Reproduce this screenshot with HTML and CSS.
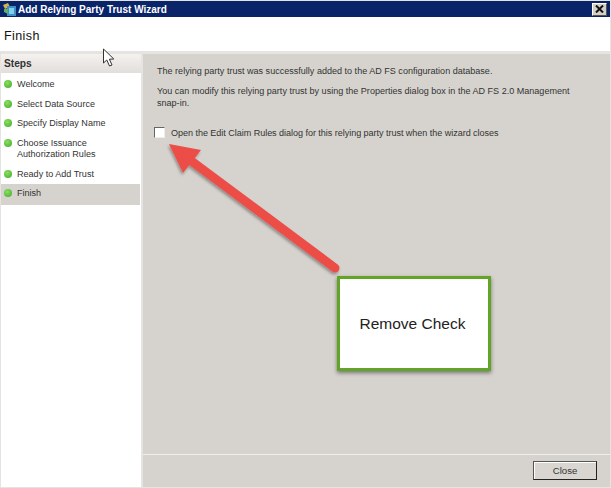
FILE: index.html
```html
<!DOCTYPE html>
<html lang="en">
<head>
  <meta charset="UTF-8">
  <title>Add Relying Party Trust Wizard</title>
  <link rel="stylesheet" href="styles.css">
</head>
<body>
  <div class="window">
    <div class="titlebar">
      <svg class="app-icon" width="16" height="15" viewBox="0 0 16 15">
        <path d="M1 3 L6 1 L8 5 L3 7 Z" fill="#d8b24a"/>
        <rect x="5" y="4" width="9" height="10" fill="#3f8fc4"/>
        <rect x="7" y="6" width="5" height="6" fill="#7fd0e8"/>
        <path d="M2 7 L6 7 L6 12 L2 10 Z" fill="#5fae6a"/>
      </svg>
      <span class="title-text">Add Relying Party Trust Wizard</span>
      <button class="title-close" type="button">
        <svg width="9" height="8" viewBox="0 0 9 8"><path d="M1 0.5 L8 7.5 M8 0.5 L1 7.5" stroke="#111" stroke-width="2" fill="none"/></svg>
      </button>
    </div>

    <div class="page-head">
      <h1>Finish</h1>
    </div>

    <div class="body">
      <div class="steps">
        <h3>Steps</h3>
        <ul>
          <li><span class="dot"></span><span>Welcome</span></li>
          <li><span class="dot"></span><span>Select Data Source</span></li>
          <li><span class="dot"></span><span>Specify Display Name</span></li>
          <li><span class="dot"></span><span>Choose Issuance<br>Authorization Rules</span></li>
          <li><span class="dot"></span><span>Ready to Add Trust</span></li>
          <li class="current"><span class="dot"></span><span>Finish</span></li>
        </ul>
      </div>

      <div class="main">
        <div class="content">
          <p>The relying party trust was successfully added to the AD FS configuration database.</p>
          <p>You can modify this relying party trust by using the Properties dialog box in the AD FS 2.0 Management <span class="nowrap">snap-in.</span></p>
          <label class="check">
            <span class="box"></span>
            <span>Open the Edit Claim Rules dialog for this relying party trust when the wizard closes</span>
          </label>
        </div>
        <div class="footer">
          <button class="button" type="button">Close</button>
        </div>
      </div>
    </div>
  </div>

  <!-- annotations on top of the screenshot -->
  <svg class="arrow" width="200" height="150" viewBox="0 0 200 150">
    <defs>
      <filter id="shadow" x="-10%" y="-10%" width="120%" height="120%">
        <feDropShadow dx="-1" dy="2" stdDeviation="1.5" flood-color="#000" flood-opacity="0.35"/>
      </filter>
    </defs>
    <g filter="url(#shadow)">
      <path d="M19 14 L51 20 L33 43 Z" fill="#ec4d47"/>
      <path d="M36 27 L185 138" stroke="#ec4d47" stroke-width="9" stroke-linecap="round" fill="none"/>
    </g>
  </svg>

  <div class="callout">Remove Check</div>

  <svg class="cursor" width="13" height="20" viewBox="0 0 13 20">
    <path d="M1.5 1 L1.5 15 L4.8 12 L7.5 18 L10 17 L7.4 11.2 L11.8 11 Z" fill="#fff" stroke="#333" stroke-width="1"/>
  </svg>
</body>
</html>
```

FILE: styles.css
```css
html,
body {
  margin: 0;
  padding: 0;
}

body {
  width: 611px;
  height: 488px;
  position: relative;
  overflow: hidden;
  background: #d6d3ce;
  font-family: "Liberation Sans", Arial, sans-serif;
  font-size: 9.05px;
  color: #222;
}

.window {
  width: 611px;
  height: 488px;
  box-sizing: border-box;
  padding-top: 1px;
  padding-right: 1px;
  display: flex;
  flex-direction: column;
  background: #e6e4e0;
}

.titlebar {
  height: 16px;
  flex: none;
  display: flex;
  align-items: center;
  gap: 0;
  padding: 0 3px 0 2px;
  background: #0a246a;
  color: #fff;
}

.title-text {
  font-size: 10px;
  font-weight: bold;
}

.title-close {
  margin-left: auto;
  width: 15px;
  height: 13px;
  padding: 0;
  display: flex;
  align-items: center;
  justify-content: center;
  background: #d4d0c8;
  border: 1px solid;
  border-color: #fff #555 #555 #fff;
}

.page-head {
  height: 34px;
  flex: none;
  box-sizing: border-box;
  display: flex;
  align-items: center;
  padding: 3px 0 0 4px;
  background: #fff;
}

.page-head h1 {
  margin: 0;
  font-size: 12.5px;
  font-weight: normal;
  color: #111;
  letter-spacing: 0.4px;
}

.body {
  flex: 1;
  display: flex;
  gap: 2px;
  margin-top: 3px;
  padding-left: 1px;
  padding-bottom: 1px;
  min-height: 0;
}

.steps {
  width: 140px;
  flex: none;
  background: #fff;
}

.steps h3 {
  margin: 0;
  height: 19px;
  box-sizing: border-box;
  padding: 4px 3px 0;
  font-size: 10.2px;
  font-weight: bold;
  color: #333;
  background: linear-gradient(to bottom, #f4f1ee, #e2dedb);
}

.steps ul {
  list-style: none;
  margin: 0;
  padding: 2px 0 0;
}

.steps li {
  display: flex;
  align-items: flex-start;
  gap: 5px;
  padding: 4px 3px 3px;
  margin-bottom: 1px;
  line-height: 11.5px;
  color: #333;
}

.steps li.current {
  margin-right: 1px;
  padding-bottom: 5px;
  background: #d6d3ce;
}

.dot {
  width: 8px;
  height: 8px;
  flex: none;
  margin-top: 1px;
  border-radius: 50%;
  background: radial-gradient(circle at 40% 35%, #8be05a, #3fa82e);
}

.main {
  flex: 1;
  display: flex;
  flex-direction: column;
  background: #d6d3ce;
}

.content {
  flex: 1;
  padding: 11px 12px 0 14px;
}

.content p {
  margin: 0 0 8px;
  line-height: 12px;
  color: #333;
}

.nowrap {
  white-space: nowrap;
}

.check {
  display: flex;
  align-items: center;
  gap: 6px;
  margin-top: 18px;
  margin-left: -3px;
  letter-spacing: -0.04px;
  color: #333;
}

.box {
  width: 9px;
  height: 9px;
  flex: none;
  background: #fff;
  border: 1px solid;
  border-color: #666 #eee #eee #666;
}

.footer {
  height: 32px;
  flex: none;
  display: flex;
  align-items: flex-start;
  justify-content: flex-end;
  padding-right: 13px;
  border-top: 1px solid #f0eeeb;
}

.button {
  width: 64px;
  height: 19px;
  margin-top: 6px;
  padding: 0;
  font-family: inherit;
  font-size: 9.6px;
  color: #333;
  background: #d9d6d1;
  border: 1px solid;
  border-color: #555 #222 #222 #555;
  box-shadow: inset 1px 1px 0 #fff;
}

.arrow {
  position: absolute;
  left: 150px;
  top: 130px;
}

.callout {
  position: absolute;
  left: 337px;
  top: 276px;
  width: 154px;
  height: 95px;
  box-sizing: border-box;
  display: flex;
  align-items: center;
  justify-content: center;
  padding-right: 3px;
  background: #fff;
  border: 3px solid #62a526;
  box-shadow: 0 2px 4px rgba(0, 0, 0, 0.45);
  font-size: 15.5px;
  color: #222;
}

.cursor {
  position: absolute;
  left: 102px;
  top: 48px;
}
```
